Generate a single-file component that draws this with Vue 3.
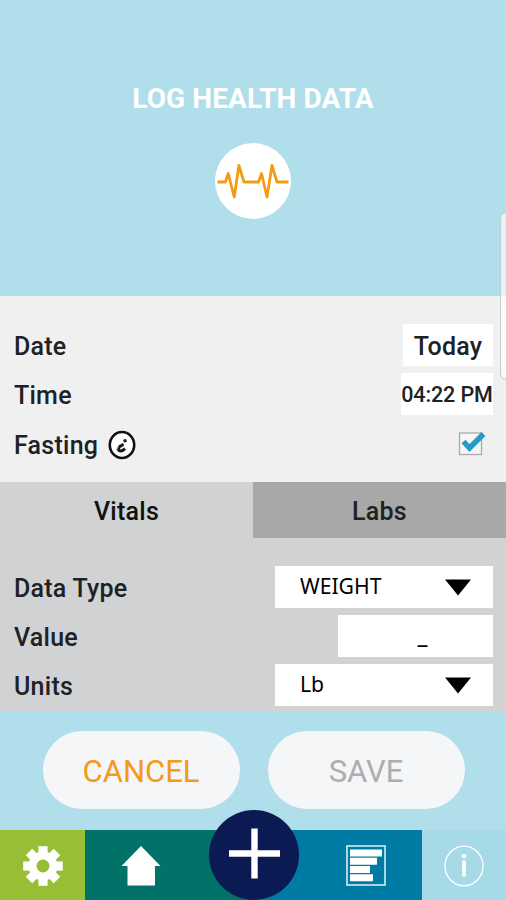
<template>
  <div class="screen">
    <header class="header">
      <h1 class="title">LOG HEALTH DATA</h1>
      <div class="pulse">
        <svg width="76" height="76" viewBox="0 0 76 76">
          <path
            d="M2.5 39H10.5L13.2 30.5L19.2 54L23.9 22.5L29 39H43.5L46.5 30.5L52 54L57 22.5L62 39H73.5"
            fill="none"
            stroke="#f39c12"
            stroke-width="2.8"
            stroke-linejoin="round"
          />
        </svg>
      </div>
    </header>

    <section class="entry">
      <div class="row">
        <span class="label">Date</span>
        <button class="field date">Today</button>
      </div>
      <div class="row">
        <span class="label">Time</span>
        <button class="field time">04:22 PM</button>
      </div>
      <div class="row last">
        <span class="label">Fasting</span>
        <svg class="hint" width="28" height="30" viewBox="0 0 28 30">
          <ellipse cx="14" cy="15" rx="12.2" ry="13" fill="#fff" stroke="#111" stroke-width="2.6" />
          <path d="M15.6 11.4L18.4 10.1" stroke="#18243c" stroke-width="3" />
          <path
            d="M15.6 14.2L11.6 16.6Q9.4 20.4 11.8 20.9Q14.5 21.2 17 18.6"
            fill="none"
            stroke="#111827"
            stroke-width="3"
          />
          <path d="M8.2 20.2L10.5 16.2" stroke="#e7a06d" stroke-width="1" />
        </svg>
        <button class="check" @click="fasting = !fasting">
          <svg width="30" height="28" viewBox="0 0 30 28">
            <rect x="2.5" y="3" width="22" height="21.5" fill="#f6f6f6" stroke="#aaa" stroke-width="1.3" />
            <path v-if="fasting" d="M6.5 11.5L12.5 18L26.5 4" fill="none" stroke="#259bc8" stroke-width="5.4" />
          </svg>
        </button>
      </div>
    </section>

    <div class="tabs">
      <button
        v-for="name in tabs"
        :key="name"
        class="tab"
        :class="{ active: name === tab }"
        @click="tab = name"
      >
        {{ name }}
      </button>
    </div>

    <section class="form">
      <div class="row">
        <span class="label">Data Type</span>
        <button class="field select">
          <span class="choice">WEIGHT</span>
          <svg width="26" height="17" viewBox="0 0 26 17"><path d="M0 .5H26L13 16.5Z" /></svg>
        </button>
      </div>
      <div class="row">
        <span class="label">Value</span>
        <button class="field value">_</button>
      </div>
      <div class="row">
        <span class="label">Units</span>
        <button class="field select">
          <span class="choice">Lb</span>
          <svg width="26" height="17" viewBox="0 0 26 17"><path d="M0 .5H26L13 16.5Z" /></svg>
        </button>
      </div>
    </section>

    <div class="actions">
      <button class="action cancel">CANCEL</button>
      <button class="action save">SAVE</button>
    </div>

    <nav class="nav">
      <a class="item settings">
        <svg width="40" height="40" viewBox="-20 -20 40 40" fill="#fff">
          <rect
            v-for="n in 8"
            :key="n"
            x="-4.6"
            y="-19.8"
            width="9.2"
            height="12"
            :transform="`rotate(${n * 45})`"
          />
          <circle r="10.5" fill="none" stroke="#fff" stroke-width="8" />
        </svg>
      </a>
      <a class="item home">
        <svg width="40" height="40" viewBox="0 0 40 40" fill="#fff">
          <path d="M20 0L39.5 20H34V39.5H6.5V20H.5Z" />
        </svg>
      </a>
      <a class="item report">
        <svg width="40" height="41" viewBox="0 0 40 41">
          <rect x="1" y="1" width="38" height="39" fill="none" stroke="#d5edf6" stroke-width="1.6" />
          <path
            d="M4 4.5H36V11.5H4ZM4 12.7H31V19.7H4ZM4 21H24V28H4ZM4 29.3H27V36.3H4Z"
            fill="#fff"
          />
        </svg>
      </a>
      <a class="item about">
        <svg width="42" height="42" viewBox="0 0 42 42">
          <ellipse cx="21" cy="21" rx="19" ry="19.8" fill="none" stroke="#fff" stroke-width="1.3" />
          <circle cx="21" cy="11.3" r="2.3" fill="#fff" />
          <path d="M21 15.5V31.5" stroke="#fff" stroke-width="3.6" />
        </svg>
      </a>
      <a class="add">
        <svg width="90" height="90" viewBox="0 0 90 90">
          <circle cx="45" cy="45" r="45" fill="#0b1a52" />
          <path d="M20 43.5H71M45.5 18.5V68.5" stroke="#fff" stroke-width="6.4" />
        </svg>
      </a>
    </nav>

    <div class="edge-handle"></div>
  </div>
</template>

<script setup>
import { ref } from "vue";

const tabs = ["Vitals", "Labs"];
const tab = ref("Vitals");
const fasting = ref(true);
</script>

<style>
body {
  margin: 0;
}
</style>

<style scoped>
.screen {
  position: relative;
  display: flex;
  flex-direction: column;
  width: 506px;
  height: 900px;
  overflow: hidden;
  background: #b0deea;
  color: #202124;
  font-family: Roboto, sans-serif;
}

button {
  margin: 0;
  padding: 0;
  border: none;
  background: none;
  color: inherit;
  font: inherit;
}

svg {
  display: block;
  flex: none;
}

.header {
  box-sizing: border-box;
  display: flex;
  flex-direction: column;
  align-items: center;
  height: 296px;
  padding-top: 82px;
}

.title {
  margin: 0;
  color: #fff;
  font-size: 28px;
  line-height: 34px;
  font-weight: 700;
  letter-spacing: 0.1px;
}

.pulse {
  margin-top: 27px;
  border-radius: 50%;
  background: #fff;
}

.entry {
  box-sizing: border-box;
  display: flex;
  flex-direction: column;
  gap: 7px;
  height: 186px;
  padding: 28px 13px 0 14px;
  background: #f0f0f0;
}

.row {
  display: flex;
  align-items: center;
  height: 42px;
}

.row.last {
  margin-top: 1px;
}

.label {
  padding-top: 2px;
  font-size: 25px;
  font-weight: 500;
  letter-spacing: 0.25px;
}

.field {
  height: 42px;
  margin-left: auto;
  background: #fff;
}

.date {
  width: 90px;
  padding-top: 2px;
  font-size: 25px;
  font-weight: 500;
  letter-spacing: 0.2px;
}

.time {
  width: 92px;
  padding-top: 1px;
  font-size: 21.5px;
  font-weight: 500;
  letter-spacing: -0.1px;
  white-space: nowrap;
}

.hint {
  margin: 2px 0 0 10px;
}

.check {
  margin: 0 6px 0 auto;
}

.tabs {
  display: flex;
  height: 56px;
}

.tab {
  flex: 1;
  padding-top: 2px;
  background: #a8a8a8;
  font-size: 25px;
  font-weight: 500;
  letter-spacing: 0.25px;
}

.tab.active {
  background: #d0d2d3;
  color: #111;
}

.form {
  box-sizing: border-box;
  display: flex;
  flex-direction: column;
  gap: 7px;
  height: 173px;
  padding: 28px 13px 0 14px;
  background: #d0d2d3;
}

.select {
  box-sizing: border-box;
  display: flex;
  align-items: center;
  justify-content: space-between;
  width: 218px;
  padding: 0 22px 0 25px;
  color: #000;
}

.choice {
  padding-bottom: 3px;
  font-family: "Noto Sans", sans-serif;
  font-size: 22.5px;
  transform: scaleX(0.94);
  transform-origin: left;
}

.value {
  width: 155px;
  padding: 2px 0 0 14px;
  color: #000;
  font-size: 22px;
}

.actions {
  box-sizing: border-box;
  display: flex;
  justify-content: center;
  gap: 28px;
  height: 119px;
  padding: 20px 0 0 1px;
}

.action {
  width: 197px;
  height: 78px;
  padding-top: 3px;
  border-radius: 39px;
  background: #f5f6f8;
  font-size: 31px;
}

.cancel {
  color: #f59a16;
}

.save {
  color: #adadad;
}

.nav {
  position: relative;
  display: flex;
  height: 70px;
}

.item {
  box-sizing: border-box;
  display: flex;
  align-items: center;
  justify-content: center;
  padding-top: 1px;
}

.settings {
  width: 85px;
  background: #97be34;
}

.home {
  width: 168px;
  padding-right: 56px;
  background: #007268;
}

.report {
  width: 169px;
  padding-left: 56px;
  background: #007ba4;
}

.about {
  width: 84px;
  background: #a7dae7;
}

.add {
  position: absolute;
  left: 209px;
  top: -20px;
}

/* system edge panel handle lying over the right side */
.edge-handle {
  position: absolute;
  top: 212px;
  right: -8px;
  box-sizing: border-box;
  width: 14px;
  height: 168px;
  border: 1px solid #c3ccd0;
  border-radius: 6px;
  background: rgba(255, 255, 255, 0.65);
}
</style>
